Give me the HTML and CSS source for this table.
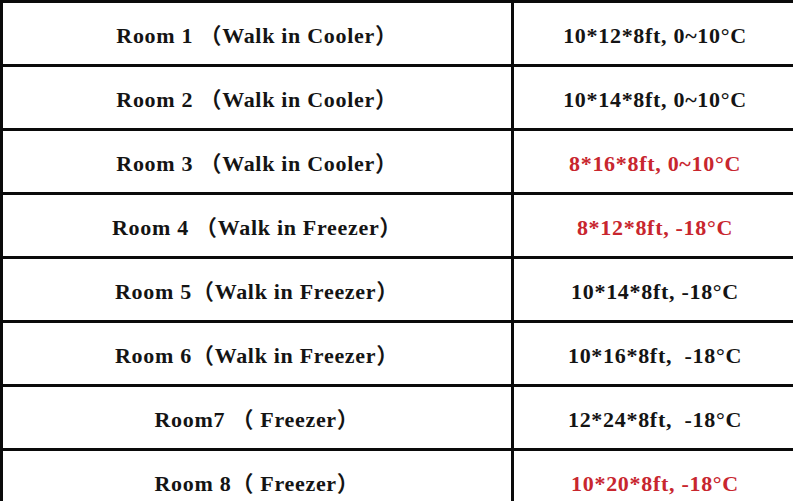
FILE: index.html
```html
<!DOCTYPE html>
<html>
<head>
<meta charset="utf-8">
<link rel="stylesheet" href="styles.css">
</head>
<body>
<table class="spec">
  <colgroup><col class="c-name"><col class="c-size"></colgroup>
  <tbody>
    <tr><td>Room 1 （Walk in Cooler）</td><td>10*12*8ft, 0~10°C</td></tr>
    <tr><td>Room 2 （Walk in Cooler）</td><td>10*14*8ft, 0~10°C</td></tr>
    <tr><td>Room 3 （Walk in Cooler）</td><td class="red">8*16*8ft, 0~10°C</td></tr>
    <tr><td>Room 4 （Walk in Freezer）</td><td class="red">8*12*8ft, -18°C</td></tr>
    <tr><td>Room 5（Walk in Freezer）</td><td>10*14*8ft, -18°C</td></tr>
    <tr><td>Room 6（Walk in Freezer）</td><td>10*16*8ft, &nbsp;-18°C</td></tr>
    <tr><td>Room7 （ Freezer）</td><td>12*24*8ft, &nbsp;-18°C</td></tr>
    <tr><td>Room 8（ Freezer）</td><td class="red">10*20*8ft, -18°C</td></tr>
  </tbody>
</table>
</body>
</html>
```
FILE: styles.css
```css
html, body {
  margin: 0;
  padding: 0;
  background: #ffffff;
  overflow: hidden;
}
.spec {
  border-collapse: collapse;
  width: 796px;
  table-layout: fixed;
  font-family: "Liberation Serif", "Noto Sans CJK SC", serif;
  font-weight: bold;
  font-size: 22px;
  line-height: 26px;
  color: #141414;
}
.c-name { width: 511px; }
.c-size { width: 285px; }
.spec td {
  border: 3px solid #0a0a0a;
  height: 56px;
  padding: 5px 0 0 0;
  text-align: center;
  vertical-align: middle;
  white-space: nowrap;
  letter-spacing: 0.7px;
}
.spec td.red {
  color: #c8262e;
}
```
